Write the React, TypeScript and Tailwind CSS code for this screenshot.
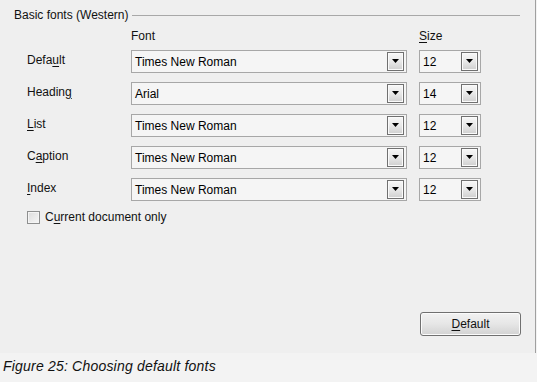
const ui = { fontFamily: '"Liberation Sans", Arial, sans-serif' };

function Mn({ text, at }: { text: string; at: number }) {
  return (
    <span>
      {text.slice(0, at)}
      <span className="underline underline-offset-[2px]">{text[at]}</span>
      {text.slice(at + 1)}
    </span>
  );
}

function DropButton() {
  return (
    <div className="my-px mr-[2px] flex w-[17px] items-center justify-center border border-[#707070] bg-gradient-to-b from-[#f7f7f7] via-[#e8e8e8] to-[#cfcfcf] shadow-[inset_0_0_0_1px_#fafafa]">
      <svg width="7" height="4" viewBox="0 0 7 4" className="mb-[1px]">
        <path d="M0 0h7L3.5 4z" fill="#000" />
      </svg>
    </div>
  );
}

function Combo({ value, width }: { value: string; width: string }) {
  return (
    <div className={`flex h-[23px] ${width} border border-[#a7a7a7] bg-[#f5f5f5]`}>
      <div className="flex flex-1 items-center pl-[3px] text-[12px] text-black">{value}</div>
      <DropButton />
    </div>
  );
}

const rows = [
  { label: "Default", at: 4, font: "Times New Roman", size: "12" },
  { label: "Heading", at: 6, font: "Arial", size: "14" },
  { label: "List", at: 0, font: "Times New Roman", size: "12" },
  { label: "Caption", at: 1, font: "Times New Roman", size: "12" },
  { label: "Index", at: 0, font: "Times New Roman", size: "12" },
];

export default function App() {
  return (
    <div className="w-[537px] h-[382px] bg-[#f3f3f3] text-[12px] text-[#111]" style={ui}>
      <div className="relative h-[353px] w-[536px] border-r border-[#a0a0a0] bg-[#efefef]">
        <div className="flex items-center pl-[14px] pt-[8px] leading-[14px]">
          <span>Basic fonts (Western)</span>
          <div className="ml-[4px] mr-[15px] mt-[1px] h-px flex-1 bg-[#a8a8a8]" />
        </div>

        <div className="mt-[7px] flex pl-[131px] leading-[14px]">
          <span className="w-[288px]">Font</span>
          <span>
            <Mn text="Size" at={0} />
          </span>
        </div>

        <div className="mt-[7px] flex flex-col gap-[9px]">
          {rows.map((r) => (
            <div key={r.label} className="flex h-[23px] items-center">
              <div className="mb-[4px] w-[131px] pl-[27px] leading-[14px]">
                <Mn text={r.label} at={r.at} />
              </div>
              <Combo value={r.font} width="w-[276px]" />
              <div className="w-[12px]" />
              <Combo value={r.size} width="w-[62px]" />
            </div>
          ))}
        </div>

        <label className="mt-[9px] flex items-center pl-[27px] leading-[14px]">
          <span className="h-[13px] w-[13px] border border-[#8e8f8f] bg-gradient-to-br from-[#dcdcdc] to-[#f6f6f6] shadow-[inset_0_0_0_1px_#f4f4f4]" />
          <span className="ml-[5px]">
            <Mn text="Current document only" at={1} />
          </span>
        </label>

        <div className="absolute left-[420px] top-[312px] flex h-[24px] w-[101px] items-center justify-center rounded-[3px] border border-[#707070] bg-gradient-to-b from-[#f2f2f2] via-[#e6e6e6] to-[#d2d2d2] shadow-[inset_0_0_0_1px_#fbfbfb]">
          <Mn text="Default" at={0} />
        </div>
      </div>
      <div className="pl-[3px] pt-[5px] text-[14px] italic leading-[16px] tracking-[0.2px] text-[#111]">
        Figure 25: Choosing default fonts
      </div>
    </div>
  );
}
